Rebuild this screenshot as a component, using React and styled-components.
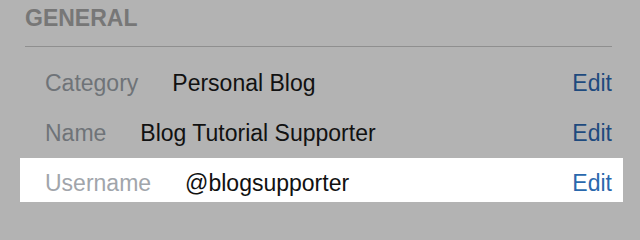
import styled, { createGlobalStyle } from "styled-components";

const GlobalStyle = createGlobalStyle`
  html, body {
    margin: 0;
    padding: 0;
    background: #b3b3b3;
  }
  body {
    font-family: "Liberation Sans", Arial, Helvetica, sans-serif;
    -webkit-font-smoothing: antialiased;
  }
`;

const Container = styled.div`
  width: 640px;
  height: 213px;
  box-sizing: border-box;
  padding: 0 28px 0 25px;
  overflow: hidden;
`;

const Header = styled.h2`
  margin: 0;
  padding-bottom: 9px;
  line-height: 37px;
  font-size: 23px;
  font-weight: 700;
  color: #777777;
  border-bottom: 1px solid #8f8f8f;
`;

const List = styled.div`
  padding-top: 11px;
  display: flex;
  flex-direction: column;
`;

const Row = styled.div`
  display: flex;
  align-items: center;
  box-sizing: border-box;
  height: ${(p) => (p.$active ? "44px" : "50px")};
  padding: ${(p) => (p.$active ? "6px 11px 0 25px" : "0 0 0 20px")};
  margin: ${(p) => (p.$active ? "0 -11px 0 -5px" : "0")};
  background: ${(p) => (p.$active ? "#ffffff" : "transparent")};
  font-size: 23px;
  line-height: 26px;
`;

const Label = styled.span`
  margin-right: 34px;
  color: ${(p) => (p.$active ? "#a1a5ab" : "#6f7378")};
`;

const Value = styled.span`
  flex: 1;
  color: #111111;
`;

const EditLink = styled.a`
  color: ${(p) => (p.$active ? "#2a68ad" : "#1e4a7e")};
  text-decoration: none;
  cursor: pointer;
`;

const fields = [
  { label: "Category", value: "Personal Blog" },
  { label: "Name", value: "Blog Tutorial Supporter" },
  { label: "Username", value: "@blogsupporter", active: true },
];

const App = () => {
  return (
    <>
      <GlobalStyle />
      <Container>
        <Header>GENERAL</Header>
        <List>
          {fields.map((f) => (
            <Row key={f.label} $active={f.active}>
              <Label $active={f.active}>{f.label}</Label>
              <Value>{f.value}</Value>
              <EditLink $active={f.active}>Edit</EditLink>
            </Row>
          ))}
        </List>
      </Container>
    </>
  );
};

export default App;
